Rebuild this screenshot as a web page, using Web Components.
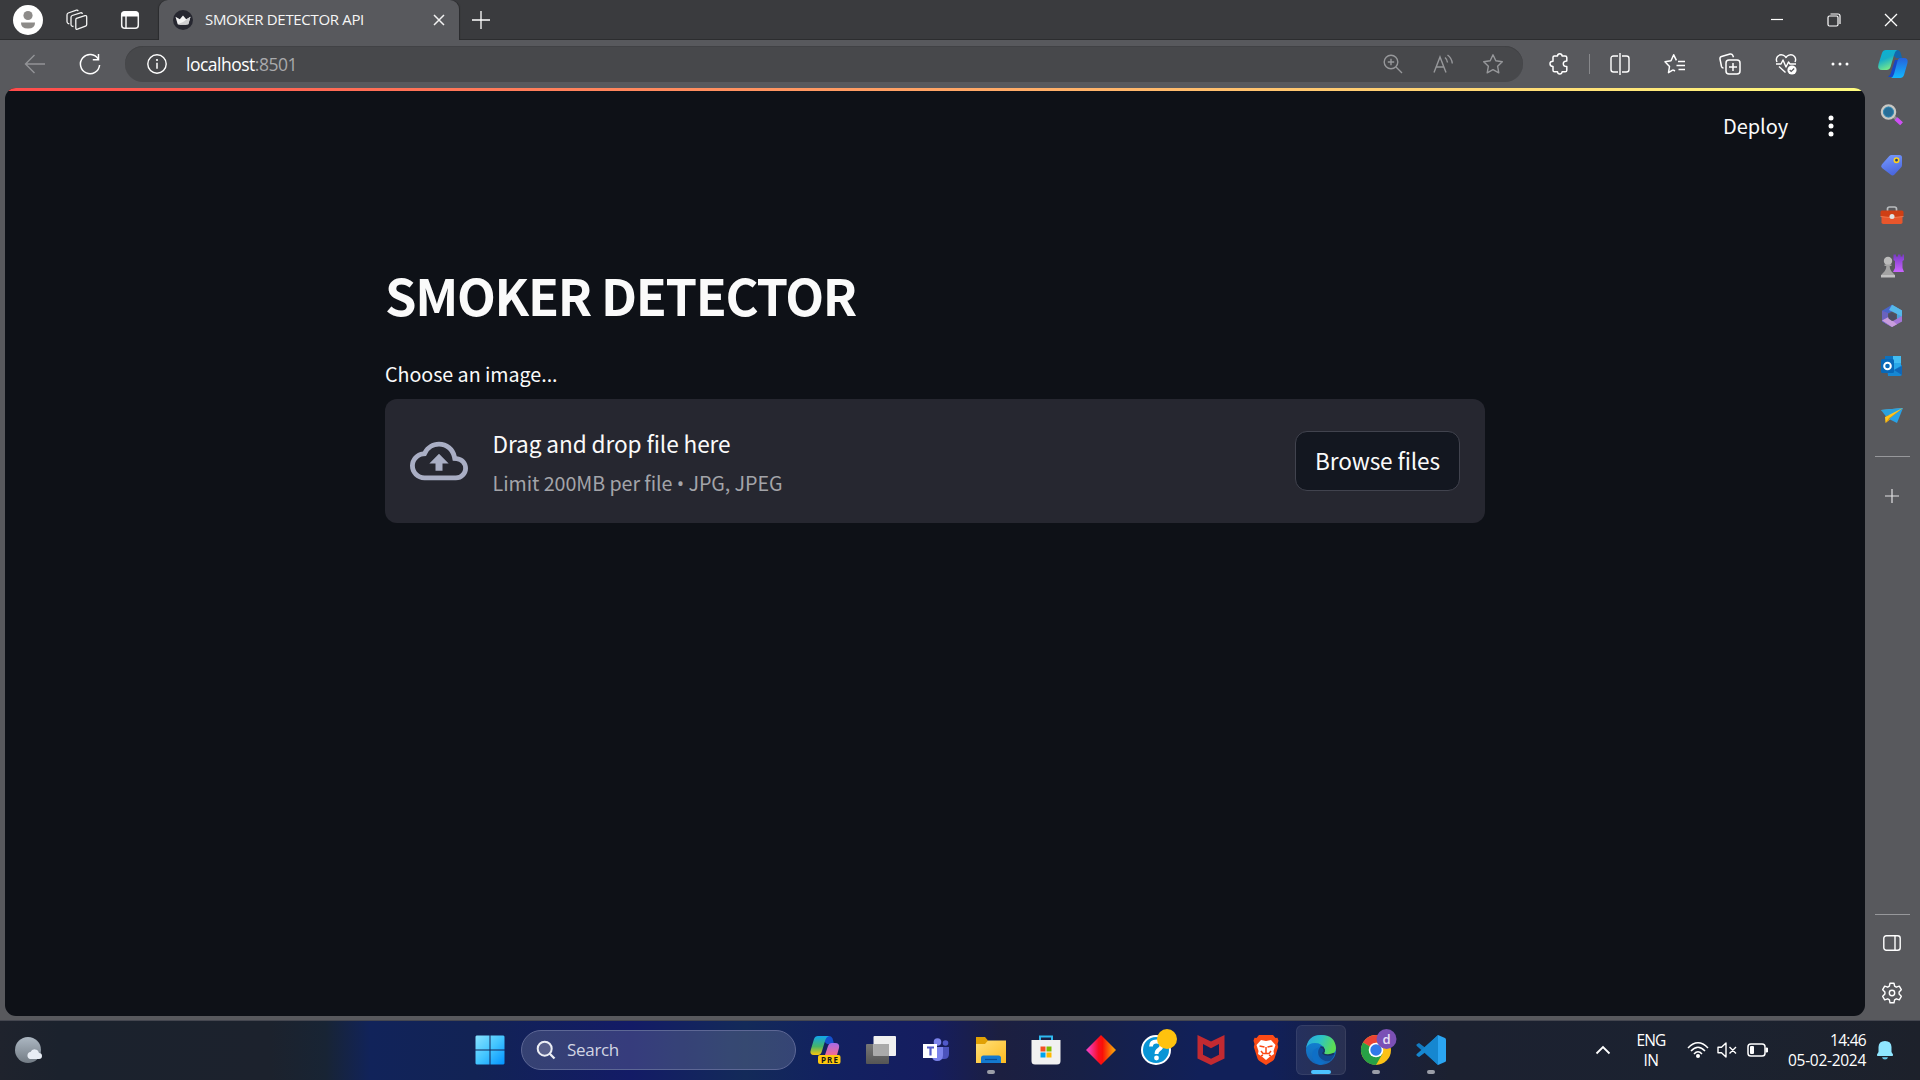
<!DOCTYPE html>
<html lang="en">
<head>
<meta charset="utf-8">
<title>SMOKER DETECTOR API</title>
<style>
html,body{margin:0;height:100%;overflow:hidden;background:#58595d}
body{font-family:"Open Sans","Noto Sans",sans-serif;color:#fff}
</style>
</head>
<body>
<desktop-screen></desktop-screen>
<script>
const ICONS={
avatar:[30,30,`<circle cx="15" cy="15" r="15" fill="#fff"/><circle cx="15" cy="10.5" r="4.6" fill="#8d8b89"/><path d="M8 17.5h14q.3 6-7 6t-7-6z" fill="#8d8b89"/>`],
spaces:[22,22,`<g fill="none" stroke="#f4f4f4" stroke-width="1.3" stroke-linejoin="round"><path d="M10.500 9.300l8.500-2.600q1.700-.4 1.700 1.300v7.500q0 1.300-1.200 1.700l-8 3q-1.700.5-1.700-1.200v-8q0-1.300.7-1.700z"/><path d="M7.500 17.500l-1.500-.3q-1-.5-1-1.700V8.500q0-1.500 1.200-2L14.500 3.800q1.500-.4 1.800 1.200M3.300 14.800l-1.300-.5q-1-.5-1-1.700V6q0-1.500 1.200-2L10.500 1.200q1.300-.3 1.600.9"/></g>`],
tabs:[20,20,`<rect x="1.700" y="1.700" width="16.600" height="16.600" rx="3" fill="none" stroke="#f4f4f4" stroke-width="1.500"/><path d="M1.500 6.500V4.500a3 3 0 013-3h11a3 3 0 013 3v2z" fill="#fff"/><path d="M6 6v12" stroke="#f4f4f4" stroke-width="1.500"/>`],
crown:[20,20,`<circle cx="10" cy="10" r="10" fill="#262730"/><path d="M2.500 6.700l4.300 2.500L10 5.500l3.200 3.700 4.300-2.500-2.200 7.500q-5.300 1-10.600 0z" fill="#f4f4f4"/><path d="M10 12l7.500-5.300-2.200 7.500q-5.300.8-10.600 0z" fill="#cfcfd1"/>`],
x:[12,12,`<path d="M1 1l10 10M11 1L1 11" stroke="#f2f2f2" stroke-width="1.500"/>`],
plus:[18,18,`<path d="M9 0v18M0 9h18" stroke="#fff" stroke-width="1.300"/>`],
min:[14,14,`<path d="M1 6.500h12" stroke="#fff" stroke-width="1.200"/>`],
restore:[14,14,`<rect x="1" y="3" width="10" height="10" rx="1.500" fill="none" stroke="#fff" stroke-width="1.200"/><path d="M3.500 1h7.500q2 0 2 2v8" fill="none" stroke="#fff" stroke-width="1.200"/>`],
close:[14,14,`<path d="M1 1l12 12M13 1L1 13" stroke="#fff" stroke-width="1.300"/>`],
back:[22,20,`<path d="M21 10H1.500M10.500 1L1.500 10l9 9" fill="none" stroke="#929397" stroke-width="1.400"/>`],
reload:[22,22,`<path d="M19.300 6.200A9.600 9.600 0 1020.600 12" fill="none" stroke="#fff" stroke-width="1.500"/><path d="M19.500 1v5.700h-5.700" fill="none" stroke="#fff" stroke-width="1.500"/>`],
info:[20,20,`<circle cx="10" cy="10" r="9.200" fill="none" stroke="#fff" stroke-width="1.400"/><path d="M10 8.700v6" stroke="#fff" stroke-width="1.500"/><circle cx="10" cy="6" r="1.100" fill="#fff"/>`],
zoom:[20,20,`<g fill="none" stroke="#97989b" stroke-width="1.400"><circle cx="8" cy="8" r="6.800"/><path d="M13 13l6 6M8 4.800v6.400M4.800 8h6.400"/></g>`],
read:[20,20,`<g fill="none" stroke="#97989b" stroke-width="1.400"><path d="M1 18.500L7 3l6 15.500M3 13h8M12 3.500q2.200 1.800 2.500 5M14.500 1q4.300 3 4.800 8.500"/></g>`],
star:[22,22,`<path d="M11 1.800l2.800 6 6.500.9-4.700 4.500 1.200 6.600L11 16.600l-5.800 3.200 1.200-6.600L1.700 8.700l6.500-.9z" fill="none" stroke="#97989b" stroke-width="1.400" stroke-linejoin="round"/>`],
puzzle:[20,22,`<path d="M4 4.300q0-1.300 1.300-1.300h3.200q.2-2.200 2.300-2.200t2.300 2.200h3q1.700 0 1.700 1.500v3.500q-3.500 0-3.500 2.800t3.500 2.800v3.600q0 1.600-1.700 1.600h-3q-.2 2.200-2.300 2.200t-2.300-2.200H5.600Q4 18.800 4 17.200v-3.600q-3-.2-3-2.800t3-2.600z" fill="none" stroke="#fff" stroke-width="1.500" stroke-linejoin="round"/>`],
split:[20,22,`<path d="M8 3H3.500Q1 3 1 5.500v11Q1 19 3.500 19H8M12 3h4.500Q19 3 19 5.500v11q0 2.500-2.500 2.500H12M10 0v22" fill="none" stroke="#fff" stroke-width="1.400"/>`],
favs:[22,22,`<path d="M14 8.500h7M12.500 12.500h8.500M14.500 16.500h6.500M9 16.800l-4.500 2.900 1-6.200L1 8.700l6-.9 2.700-6 2.700 5.500M9 16.800l2 1.200" fill="none" stroke="#fff" stroke-width="1.500" stroke-linejoin="round"/>`],
collect:[22,22,`<g fill="none" stroke="#fff" stroke-width="1.500"><rect x="7" y="7" width="14" height="14" rx="3"/><path d="M14 10v8M10 14h8M4.500 15Q3 15 2.500 13.500L1 6Q.7 4 2.500 3.500L11 1q2-.4 2.700 1.300l.8 2"/></g>`],
heart:[22,22,`<path d="M2 9Q.5 6 2.500 3.500 5 1 8 2.200 10 3 11 4.500q1-1.500 3-2.300 3-1.200 5.500 1.300 2 2.500.5 5.500M1 11h5l2-4 3 7 2.500-5 1.500 2h6M4 13.500l6.500 6" fill="none" stroke="#fff" stroke-width="1.400" stroke-linejoin="round"/><circle cx="17" cy="17" r="4.600" fill="#fff"/><path d="M14.700 17l1.500 1.500 3-3" fill="none" stroke="#55565a" stroke-width="1.200"/>`],
dots:[18,6,`<g fill="#fff"><circle cx="2" cy="3" r="1.500"/><circle cx="9" cy="3" r="1.500"/><circle cx="16" cy="3" r="1.500"/></g>`],
copilot:[30,28,`<defs><linearGradient id="a" x2=".4" y2="1"><stop stop-color="#08b2d6"/><stop offset=".5" stop-color="#17adc8"/><stop offset="1" stop-color="#74e88c"/></linearGradient><linearGradient id="b" x2="0" y2="1"><stop stop-color="#2662dc"/><stop offset="1" stop-color="#12b7ff"/></linearGradient></defs><path d="M10 27h9q2.500 0 3.300-3l4-14H17l-4.500 14z" fill="#1747c7"/><path d="M7 0h12q3 0 4 4l1 4h-6l-2-2z" fill="#1268ad"/><path d="M8 0h11q-2 1-3 5l-3.500 12q-1 3-4 3H4q-5 0-3.500-6L4 3q1-3 4-3z" fill="url(#a)"/><path d="M22 8h4q4.500 0 3.500 5l-3.500 12q-1 3-4 3H13q2-1 3-4l3.500-13q.7-3 2.500-3z" fill="url(#b)"/>`],
search3d:[24,22,`<path d="M13.500 12.500l8 7" stroke="#888b8e" stroke-width="3"/><path d="M16 14.800l5.500 5" stroke="#ce4ef5" stroke-width="4.200"/><circle cx="8.500" cy="8" r="6.500" fill="#276e98" stroke="#c9c8c4" stroke-width="2.500"/><circle cx="8.500" cy="8" r="5" fill="none" stroke="#368bb4"/>`],
tag:[24,22,`<defs><linearGradient id="a" x2=".3" y2="1"><stop stop-color="#789bff"/><stop offset="1" stop-color="#4b68df"/></linearGradient></defs><path d="M11.500 1h8q2.500 0 2.500 2.500V11q0 1.500-1 2.500l-6.500 7q-2 2-4 0L2 14q-1.800-1.800 0-3.800L9.300 2q1-1 2.200-1z" fill="url(#a)"/><circle cx="16.500" cy="6.200" r="2.200" fill="#253f70" stroke="#ffd21c" stroke-width="1.600"/>`],
tools:[24,18,`<path d="M7.500 5V3q0-2 2-2h5q2 0 2 2v2" fill="none" stroke="#b9bcbe" stroke-width="1.700"/><rect x="1.500" y="8" width="21" height="10" rx="1.800" fill="#e8562c"/><path d="M2 4.500h20q1.500 0 1.500 1.500v4q-5.500 1.500-11.500 1.500T.5 10V6Q.5 4.500 2 4.500z" fill="#cf3f14"/><path d="M.5 10.500q11.500 2.500 23 0" stroke="#f58255" fill="none" stroke-width=".8"/><circle cx="12" cy="10.500" r="2.500" fill="#dfe3e3"/>`],
chess:[24,24,`<defs><linearGradient id="a" x2="0" y2="1"><stop stop-color="#783ac5"/><stop offset="1" stop-color="#ca65ff"/></linearGradient></defs><path d="M13.500.5H16v2h2v-2h2.500v2h2v-2H24V6l-1.500 1v7l1.500 4H13l2-4V7l-1.500-1z" fill="url(#a)"/><circle cx="8" cy="7" r="4.200" fill="#bbb"/><path d="M4.500 10.500h7V12H9.700q0 4 3.300 7 2 1 2 4H1q0-3 2-4 3.300-3 3.300-7H4.500z" fill="#a3a3a3"/><path d="M1 21h14v2.500H1z" fill="#c1c1c1"/>`],
m365:[24,24,`<path d="M12 .8l10 5.700v11L17 15V9.500L9 4z" fill="#4fa1dc"/><path d="M12 .8L2 6.700v10.800l5 2.700V10l10-5z" fill="#4964c8"/><path d="M12 .8l10 5.700V12.500L9 6z" fill="#55b8ea"/><path d="M2 16.500l4 3.200L12 23l10-5.600V12l-9 5z" fill="#a575d8"/><path d="M2 6.700v10.800L12 23V17l-4-4V9z" fill="#6a62be"/><path d="M2 16.500L12 23l5-2.800-9-7z" fill="#c99ddd"/><path d="M12 8.500l4 2.200v4l-4 2.300-3.500-2.500v-4z" fill="#4c4d62"/>`],
outlook:[24,22,`<path d="M5 1h15q1 0 1 1v15H5z" fill="#28a8ea"/><path d="M5 1h8v7H5z" fill="#0d72bd"/><path d="M13 1h8v7h-8z" fill="#42bdf2"/><path d="M8 21h12q2 0 2-2v-9l-8 5-7-3z" fill="#1687d3"/><path d="M22 11v9l-8-5z" fill="#1067b8"/><rect x="1" y="4" width="13" height="14" rx="1.500" fill="#0868b8"/><circle cx="7.500" cy="11" r="3.300" fill="none" stroke="#fff" stroke-width="2"/>`],
send:[24,18,`<path d="M1 3L23 1 11 9.500z" fill="#55bde8"/><path d="M23 1L6 9.500 1 3z" fill="#2aa1dd"/><path d="M23 1L5 10l.5 6 5-4z" fill="#ffc51c"/><path d="M23 1L5.500 16l3.500-5z" fill="#e59b00"/><path d="M23 1l-6 15-8-4z" fill="#28a2e7"/>`],
thinplus:[14,14,`<path d="M7 0v14M0 7h14" stroke="#e2e2e3" stroke-width="1.200"/>`],
panel:[18,16,`<rect x=".8" y=".8" width="16.400" height="14.400" rx="2.500" fill="none" stroke="#fff" stroke-width="1.400"/><path d="M12 1v14" stroke="#fff" stroke-width="1.400"/>`],
gear:[22,22,`<path d="M9 1.200h4l.6 3 1.700 1 3-1 2 3.500-2.200 2.300v2l2.200 2.300-2 3.500-3-1-1.700 1-.6 3H9l-.6-3-1.700-1-3 1-2-3.500L3.900 12v-2L1.700 7.700l2-3.500 3 1 1.700-1z" fill="none" stroke="#fff" stroke-width="1.400" stroke-linejoin="round"/><circle cx="11" cy="11" r="2.700" fill="none" stroke="#fff" stroke-width="1.400"/>`],
kebab:[6,22,`<g fill="#fff"><circle cx="3" cy="3" r="2.500"/><circle cx="3" cy="11" r="2.500"/><circle cx="3" cy="19" r="2.500"/></g>`],
upload:[58,58,`<path transform="scale(2.4167)" fill="#a9aec4" d="M19.350 10.040A7.490 7.490 0 0012 4C9.110 4 6.600 5.640 5.350 8.040A5.994 5.994 0 000 14c0 3.310 2.690 6 6 6h13c2.760 0 5-2.240 5-5 0-2.640-2.050-4.780-4.650-4.960zM19 18H6c-2.210 0-4-1.790-4-4 0-2.050 1.530-3.760 3.560-3.970l1.070-.11.5-.95A5.469 5.469 0 0112 6c2.620 0 4.880 1.860 5.390 4.430l.3 1.500 1.530.11A2.980 2.980 0 0122 15c0 1.650-1.350 3-3 3zM8 13h2.550v3h2.900v-3H16l-4-4z"/>`],
weather:[30,28,`<defs><linearGradient id="a" x2="0" y2="1"><stop stop-color="#acb7c2"/><stop offset="1" stop-color="#737c85"/></linearGradient></defs><circle cx="14" cy="14" r="13" fill="url(#a)"/><path d="M16 23a3.600 3.600 0 01.5-7 4.500 4.500 0 018.500 1 3 3 0 010 6z" fill="#e8edf5"/>`],
start:[30,30,`<defs><linearGradient id="a" gradientUnits="userSpaceOnUse" x1="0" y1="0" x2="30" y2="30"><stop stop-color="#8ce3ff"/><stop offset=".5" stop-color="#43c5ff"/><stop offset="1" stop-color="#0091ff"/></linearGradient></defs><path d="M1.500.5h13v14h-14v-13zM15.500.5h13l1 1v13h-14zM.5 15.500h14v14h-13l-1-1zM15.500 15.500h14v13l-1 1h-13z" fill="url(#a)"/>`],
find:[20,20,`<circle cx="8.700" cy="8.700" r="7" fill="#59608b" stroke="#eceef4" stroke-width="2"/><path d="M13.800 13.800l4.700 4.700" stroke="#eceef4" stroke-width="2.300"/>`],
pre:[32,30,`<defs><linearGradient id="a" x2="0" y2="1"><stop stop-color="#11a5ed"/><stop offset=".55" stop-color="#46b568"/><stop offset="1" stop-color="#fbc80c"/></linearGradient><linearGradient id="b" x2="0" y2="1"><stop stop-color="#a66be9"/><stop offset="1" stop-color="#f46b91"/></linearGradient></defs><path d="M8 1h11q3 0 4 4l1 4h-7z" fill="#1450cf"/><path d="M8 1h11q-3 1-4 5l-3 10q-1 4-4 4H4q-5 0-3-6L4 4q1-3 4-3z" fill="url(#a)"/><path d="M22 8h3q5 0 4 5l-2 7H15l3-9q1-3 4-3z" fill="url(#b)"/><rect x="8" y="20" width="22.500" height="9" rx="2" fill="#ffc90e"/><text x="11" y="27.500" font-size="8" font-weight="700" font-family="Noto Sans" fill="#161616" textLength="17">PRE</text>`],
views:[32,30,`<defs><linearGradient id="a" x2="0" y2="1"><stop stop-color="#777"/><stop offset="1" stop-color="#555"/></linearGradient></defs><rect x="1" y="9" width="23" height="20" rx="1" fill="url(#a)"/><rect x="8.500" y="1" width="22.500" height="20" rx="1" fill="#f0f0f0"/><path d="M8.500 9H24v12H8.500z" fill="#aaa"/>`],
teams:[28,26,`<circle cx="15.500" cy="5" r="3.800" fill="#7b83eb"/><circle cx="23.500" cy="6" r="2.800" fill="#5059c9"/><path d="M19 10h8v7q0 5-5 5h-3z" fill="#4b53bc"/><path d="M10 10h11v8q0 6-6 6-4 0-5-4z" fill="#7b83eb"/><rect x="1" y="7" width="14" height="14" fill="#fff"/><path d="M5 10.500h7M8.500 10.500v8" stroke="#5059c9" stroke-width="2.200"/>`],
explorer:[30,28,`<defs><linearGradient id="a" y2="1"><stop stop-color="#ffe07a"/><stop offset="1" stop-color="#fdbb20"/></linearGradient></defs><path d="M0 1h9l3 3.500V10H0z" fill="#e1a105"/><path d="M12 4.500h18V27H0V8h9z" fill="url(#a)"/><path d="M5 27v-5q0-2.500 2.500-2.500h15Q25 19.500 25 22v5z" fill="#1479cf"/><path d="M9 23.500h12" stroke="#084d96" stroke-width="1.200"/>`],
store:[30,30,`<path d="M9 5V1.500h12V5" fill="none" stroke="#2fb9f0" stroke-width="2"/><path d="M.5 5h29v21q0 3.500-3.500 3.500H4Q.5 29.500.5 26z" fill="#f1f1f1"/><path d="M9.500 11.500h5v5h-5z" fill="#f25022"/><path d="M15.500 11.500h5v5h-5z" fill="#7fba00"/><path d="M9.500 17.500h5v5h-5z" fill="#00a4ef"/><path d="M15.500 17.500h5v5h-5z" fill="#ffb900"/>`],
diamond:[30,30,`<defs><linearGradient id="a"><stop offset=".1" stop-color="#f43ab2"/><stop offset=".42" stop-color="#fa0d22"/><stop offset=".55" stop-color="#f91008"/><stop offset=".9" stop-color="#f89608"/></linearGradient></defs><path d="M15 0l15 15-15 15L0 15z" fill="url(#a)"/>`],
help:[38,38,`<circle cx="16" cy="22" r="14" fill="#0995d6" stroke="#fff" stroke-width="2"/><path d="M11 18.500q0-5 5.500-5 5 0 5 4 0 2.500-2.500 4-2.500 1.500-2.500 4.500" fill="none" stroke="#fff" stroke-width="3.800"/><circle cx="16.500" cy="30" r="2.400" fill="#fff"/><circle cx="27" cy="11" r="10" fill="#ffc20e"/>`],
mcafee:[28,30,`<path d="M.5 0L14 6.500 27.500 0v23.500L14 30 .5 23.500zM6 9v10.800l8 4 8-4V9l-8 4.200z" fill="#c22a31" fill-rule="evenodd"/>`],
brave:[26,30,`<path d="M6 0h14l2.500 3 2-.2 1 3-1 3.200.7 3-3.700 11.500q-.7 1.700-2 2.500L13 30l-6.500-4q-1.300-.8-2-2.500L.8 12l.7-3-1-3.200 1-3 2 .2z" fill="#fb4a16"/><path d="M8 5l5 1 5-1 4.500 5-2 6 .5 3-4.500 3-3.500 3-3.500-3L5 19l.5-3-2-6z" fill="#fff"/><path d="M6.500 11l5 1M19.500 11l-5 1M13 12v6M8 16l2 2.500h6l2-2.500M8 21l2-1M18 21l-2-1" stroke="#fb4a16" stroke-width="1.500" fill="none"/>`],
edge:[30,30,`<defs><linearGradient id="a" y2=".3"><stop stop-color="#2aa5e4"/><stop offset=".5" stop-color="#2cc3c6"/><stop offset="1" stop-color="#5cdd53"/></linearGradient><linearGradient id="b" x2="0" y2="1"><stop stop-color="#0f87d8"/><stop offset="1" stop-color="#1664b5"/></linearGradient></defs><circle cx="15" cy="15" r="15" fill="url(#b)"/><path d="M.2 13Q2 0 15 0q14 0 15 13 0 6.500-8 7-4 0-5-1.800 2-2 1-4.500Q16 8 9 8 2.500 8 .2 13z" fill="url(#a)"/><path d="M17.500 11.500q2 4-.5 6.700Q18 20 22 20q4 0 7-2.500-1 5-5 8.500-7 1-10.500-4-3-5 .5-10z" fill="#124a92"/><path d="M14.500 12q-4 2-3.500 7 .8 6.500 8 8.500-2.500 2.500-5 2.400Q7 28 6 21q-.2-8 8.500-9z" fill="#0e6fc7"/><path d="M14.500 12Q17 11.800 18.200 14.500q.6 2.300-1.200 3.700Q18.500 20 22 20q3 0 6-1.500" stroke="#17345f" stroke-width="1.500" fill="none"/>`],
chrome:[36,36,`<g transform="translate(0 6)"><circle cx="15" cy="15" r="15" fill="#fbc116"/><path d="M15 15L2 7.500A15 15 0 0128 7.500H15z" fill="#ea4335"/><path d="M2 7.500A15 15 0 0015 30l6.500-11.300L15 15z" fill="#27a046"/><circle cx="15" cy="15" r="7.300" fill="#fff"/><circle cx="15" cy="15" r="5.700" fill="#3179e8"/></g><circle cx="25.500" cy="10" r="10" fill="#7b50b5"/><text x="25.500" y="14.500" text-anchor="middle" font-size="13" font-weight="600" font-family="Open Sans" fill="#e9e0f7">d</text>`],
vscode:[30,30,`<path d="M22 0L9 12.500 3 8 .8 9.300q-1 .8 0 1.700L22 30z" fill="#137bc2"/><path d="M22 30L9 17.500 3 22 .8 20.700q-1-.8 0-1.700L22 0z" fill="#1687d0"/><path d="M22 0l7 3q1 .5 1 1.500v21q0 1-1 1.500l-7 3z" fill="#2ba5f1"/>`],
up:[16,10,`<path d="M1.500 8.500L8 2l6.500 6.500" fill="none" stroke="#fff" stroke-width="1.800"/>`],
wifi:[22,18,`<g fill="none" stroke="#fff" stroke-width="1.500"><path d="M1 7q10-10.500 20 0M4 10q7-7.500 14 0M7 13q4-4.300 8 0"/></g><circle cx="11" cy="15" r="2" fill="#fff"/>`],
mute:[20,16,`<path d="M1 5.200h3.500L9 1v14l-4.500-4.200H1zM12.500 5l6.500 6.500M19 5l-6.500 6.500" fill="none" stroke="#fff" stroke-width="1.400" stroke-linejoin="round"/>`],
battery:[22,16,`<rect x="1" y="2" width="17" height="12" rx="2.800" fill="none" stroke="#fff" stroke-width="1.500"/><rect x="3" y="4" width="4" height="8" rx="1" fill="#fff"/><path d="M19 6h1.500v4H19z" fill="#fff" stroke="#fff"/>`],
bell:[18,20,`<path d="M9 1q6.300 0 6.500 6v5l1.500 2.500q.4 1.500-1 1.500H2q-1.400 0-1-1.500L2.500 12V7Q2.700 1 9 1z" fill="#8fe6ff"/><path d="M6 17.300h6q-.5 2.200-3 2.200t-3-2.200z" fill="#67c7ea"/>`]
};

const define=(name,html,after)=>{
  const template=document.createElement('template');
  template.innerHTML=html;
  customElements.define(name,class extends HTMLElement{
    constructor(){super();this.attachShadow({mode:'open'}).append(template.content.cloneNode(true));}
    connectedCallback(){if(after)after.call(this,this.shadowRoot);}
  });
};

define('ui-icon',`<style>:host{display:grid;place-items:center;flex:none;box-sizing:border-box}svg{display:block;overflow:visible}</style>`,function(root){
  const [w,h,body]=ICONS[this.getAttribute('name')];
  const holder=document.createElement('template');
  holder.innerHTML=`<svg xmlns="http://www.w3.org/2000/svg" width="${w}" height="${h}" viewBox="0 0 ${w} ${h}">${body}</svg>`;
  root.append(holder.content);
});

/* A single line of text whose tracking is set so that it spans data-w pixels. */
define('fit-text',`<style>:host{display:block;flex:none;white-space:nowrap}span{display:inline-block}</style><span><slot></slot></span>`,function(root){
  const span=root.querySelector('span'),target=+this.dataset.w;
  const n=this.textContent.length,now=span.getBoundingClientRect().width;
  if(target&&now)this.style.letterSpacing=((target-now)/n).toFixed(3)+'px';
});

define('title-bar',`<style>
:host{display:grid;grid-template-columns:56px 42px 61px 300px 43px 1fr 57px 57px 58px;height:40px;background:#3a3b3e;box-shadow:inset 0 -1px #2c2d2f}
ui-icon{height:40px}
.tab{display:flex;align-items:center;background:#58595d;border-radius:9px 9px 0 0;padding-left:14px;box-shadow:-1px 0 1px #2b2c2e,1px 0 1px #2b2c2e}
fit-text{margin-left:12px;font-size:15px;line-height:38px;margin-top:-2px;flex:1;color:#f6f6f6}
.tab ui-icon:last-child{width:40px}
.s{padding-left:3px}
</style><ui-icon name="avatar"></ui-icon><ui-icon name="spaces"></ui-icon><ui-icon class="s" name="tabs"></ui-icon>
<div class="tab"><ui-icon name="crown"></ui-icon><fit-text data-w="159">SMOKER DETECTOR API</fit-text><ui-icon name="x"></ui-icon></div>
<ui-icon name="plus"></ui-icon><i></i><ui-icon name="min"></ui-icon><ui-icon name="restore"></ui-icon><ui-icon name="close"></ui-icon>`);

define('address-bar',`<style>
:host{display:flex;align-items:center;flex:1;height:36px;border-radius:18px;background:#47484b;box-sizing:border-box;padding:0 5px 0 22px;box-shadow:inset 0 1px #414245}
fit-text{font-size:17.5px;line-height:34px;margin-left:19px}
span{color:#a9aaac}i{flex:1}ui-icon{width:50px}.info{width:20px}
</style><ui-icon class="info" name="info"></ui-icon><fit-text data-w="111">localhost<span>:8501</span></fit-text><i></i>
<ui-icon name="zoom"></ui-icon><ui-icon name="read"></ui-icon><ui-icon name="star"></ui-icon>`);

define('tool-bar',`<style>
:host{display:flex;align-items:center;height:47px;margin-bottom:1px;background:#58595d}
.sep{width:1px;height:20px;background:#87888b;margin:0 6px 0 5px}
</style><ui-icon name="back" style="width:70px"></ui-icon><ui-icon name="reload" style="width:40px;margin-right:15px"></ui-icon>
<address-bar></address-bar>
<ui-icon name="puzzle" style="width:50px;margin-left:11px"></ui-icon><div class="sep"></div>
<ui-icon name="split" style="width:47px"></ui-icon><ui-icon name="favs" style="width:64px"></ui-icon><ui-icon name="collect" style="width:46px"></ui-icon><ui-icon name="heart" style="width:66px"></ui-icon><ui-icon name="dots" style="width:42px"></ui-icon><ui-icon name="copilot" style="width:59px;padding-left:5px"></ui-icon>`);

define('side-bar',`<style>
:host{display:flex;flex-direction:column;width:55px;flex:none;padding:2px 1px 0 0;box-sizing:border-box}
ui-icon{height:50.2px}hr{width:35px;height:1px;border:0;background:#97989b;margin:0 auto}
.grow{flex:1}
</style><ui-icon name="search3d"></ui-icon><ui-icon name="tag"></ui-icon><ui-icon name="tools"></ui-icon><ui-icon name="chess"></ui-icon><ui-icon name="m365"></ui-icon><ui-icon name="outlook"></ui-icon><ui-icon name="send"></ui-icon>
<hr style="margin-top:15px"><ui-icon name="thinplus" style="height:77px"></ui-icon><div class="grow"></div>
<hr><ui-icon name="panel" style="height:56px"></ui-icon><ui-icon name="gear" style="height:44px;margin-bottom:5px"></ui-icon>`);

define('browse-button',`<style>
:host{display:grid;place-items:center;width:165px;height:60px;box-sizing:border-box;border:1px solid #41434e;border-radius:12px;background:#131720;font-size:22.6px;line-height:30px}
</style><fit-text data-w="125">Browse files</fit-text>`);

define('file-drop',`<style>
:host{display:flex;align-items:center;width:1100px;height:124px;box-sizing:border-box;padding:0 25px;border-radius:12px;background:#262730}
.copy{flex:1;margin-left:24.5px;padding-top:2px}
.a{font-size:22.6px;line-height:36px;color:#fafafa}
.b{font-size:19.700px;line-height:30px;margin-top:6px;color:#a3a4a9}
.b span{font-family:"Open Sans"}
</style><ui-icon name="upload"></ui-icon>
<div class="copy"><fit-text class="a" data-w="238">Drag and drop file here</fit-text><fit-text class="b" data-w="290">Limit 200MB per file <span>•</span> JPG, JPEG</fit-text></div>
<browse-button></browse-button>`);

define('app-page',`<style>
:host{display:block;flex:1;margin:0 0 0 5px;background:#0e1117;border-radius:11px;overflow:hidden;height:928px;font-family:"Noto Sans CJK SC","Noto Sans",sans-serif;color:#fafafa}
.line{height:3px;background:linear-gradient(90deg,#ff4b4b,#fffd80)}
header{display:flex;height:69px;align-items:center;justify-content:flex-end;padding-right:31px}
header fit-text{font-size:20px;line-height:30px;margin-right:40px}
main{width:1100px;margin:104px 0 0 380px}
h1{margin:0;font-size:50.500px;line-height:60px;font-weight:700}
.label{font-size:19.700px;line-height:30px;margin:35px 0 10px}
</style><div class="line"></div><header><fit-text data-w="65">Deploy</fit-text><ui-icon name="kebab"></ui-icon></header>
<main><h1><fit-text data-w="471">SMOKER DETECTOR</fit-text></h1><fit-text class="label" data-w="172.500">Choose an image...</fit-text><file-drop></file-drop></main>`);

define('task-item',`<style>
:host{display:grid;position:relative;width:50px;height:50px;margin:0 2.500px;place-items:center;border-radius:6px;box-sizing:border-box}
:host([active]){background:#ffffff14;box-shadow:inset 0 0 0 1px #ffffff12}
i{position:absolute;bottom:1px;left:21px;width:8px;height:4px;border-radius:2px;background:#9b9ea8;display:none}
:host([open]) i{display:block}
:host([active]) i{display:block;left:15px;width:20px;background:#4cc2ff}
</style><slot></slot><i></i>`);

define('task-bar',`<style>
:host{display:flex;align-items:center;height:60px;box-sizing:border-box;border-top:1px solid #454750;padding-bottom:1px;background:linear-gradient(90deg,#1f232d 0,#1b222d 60px,#1c222d 270px,#182434 325px,#11235a 370px,#122355 475px,#131b66 630px,#132a59 745px,#122160 830px,#151d60 930px,#1c1f40 1000px,#172046 1080px,#112059 1200px,#112059 1270px,#171f42 1350px,#1c2130 1450px,#1b2230 1700px,#1d212b)}
.search{display:flex;align-items:center;width:275px;height:40px;box-sizing:border-box;border:1px solid #5d6795;border-radius:20px;background:#ffffff26;margin:0 2px 0 16px;padding-left:14px;color:#d2d5e3;font-size:17px;line-height:36px}
.search fit-text{margin-left:11px}
.grow{flex:1}.two{font-size:15.500px;line-height:20px;display:flex;flex-direction:column;margin-top:-1px}
</style>
<ui-icon name="weather" style="margin-left:14px"></ui-icon>
<ui-icon name="start" style="margin-left:431px"></ui-icon>
<div class="search"><ui-icon name="find"></ui-icon><fit-text data-w="52">Search</fit-text></div>
<task-item><ui-icon name="pre"></ui-icon></task-item>
<task-item><ui-icon name="views"></ui-icon></task-item>
<task-item><ui-icon name="teams"></ui-icon></task-item>
<task-item open><ui-icon name="explorer"></ui-icon></task-item>
<task-item><ui-icon name="store"></ui-icon></task-item>
<task-item><ui-icon name="diamond"></ui-icon></task-item>
<task-item><ui-icon name="help" style="padding:0 0 6px 6px"></ui-icon></task-item>
<task-item><ui-icon name="mcafee"></ui-icon></task-item>
<task-item><ui-icon name="brave"></ui-icon></task-item>
<task-item active><ui-icon name="edge"></ui-icon></task-item>
<task-item open><ui-icon name="chrome" style="padding:0 0 6px 6px"></ui-icon></task-item>
<task-item open><ui-icon name="vscode"></ui-icon></task-item>
<div class="grow"></div>
<ui-icon name="up" style="width:32px"></ui-icon>
<div class="two" style="align-items:center;width:56px;margin-left:4px"><fit-text data-w="29">ENG</fit-text><fit-text data-w="15">IN</fit-text></div>
<ui-icon name="wifi" style="width:38px"></ui-icon><ui-icon name="mute" style="width:20px"></ui-icon><ui-icon name="battery" style="width:42px"></ui-icon>
<div class="two" style="align-items:flex-end;width:87px"><fit-text data-w="36">14:46</fit-text><fit-text data-w="78">05-02-2024</fit-text></div>
<ui-icon name="bell" style="width:38px;margin-right:16px"></ui-icon>`);

define('desktop-screen',`<style>
:host{display:flex;flex-direction:column;width:1920px;height:1080px;overflow:hidden;background:#58595d}
.body{display:flex;height:932px;flex:none}
</style><title-bar></title-bar><tool-bar></tool-bar><div class="body"><app-page></app-page><side-bar></side-bar></div><task-bar></task-bar>`);
</script>
</body>
</html>
